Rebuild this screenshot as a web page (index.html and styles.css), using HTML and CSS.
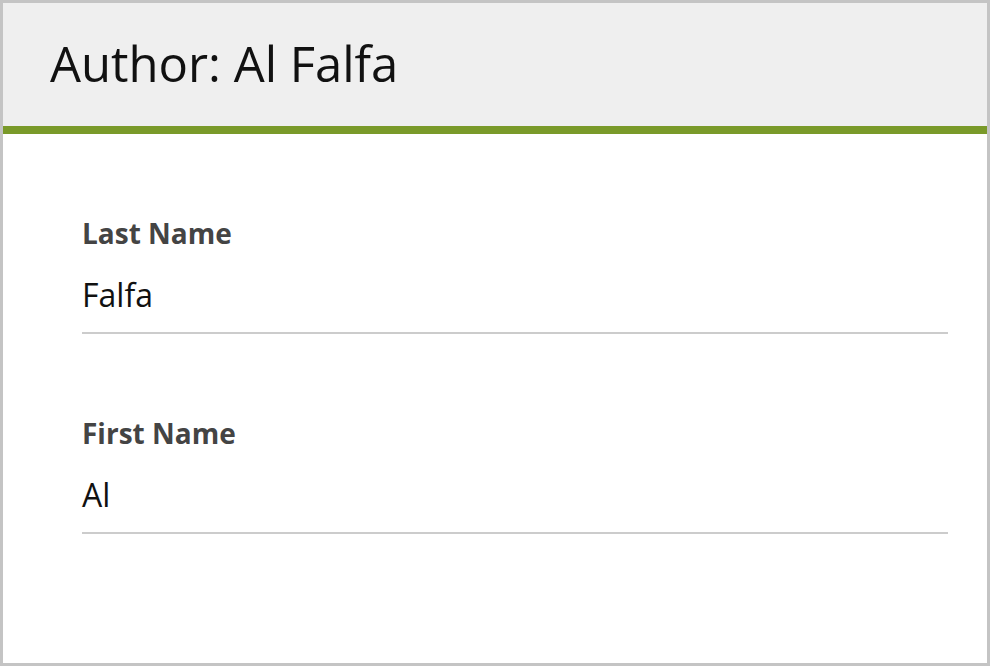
FILE: index.html
```html
<!DOCTYPE html>
<html lang="en">
<head>
    <meta charset="UTF-8">
    <title>Author: Al Falfa</title>
    <link rel="stylesheet" href="styles.css">
</head>
<body>
    <div class="panel">
        <header class="panel-header">
            <h1>Author: Al Falfa</h1>
        </header>

        <section class="fields">
            <!-- last name -->
            <div class="field">
                <label>Last Name</label>
                <div class="value">Falfa</div>
            </div>
            <!-- first name -->
            <div class="field">
                <label>First Name</label>
                <div class="value">Al</div>
            </div>
        </section>
    </div>
</body>
</html>
```

FILE: styles.css
```css
/* Reset */
body {
    margin: 0;
    padding: 0;
    font-family: 'Open Sans', 'Noto Sans', sans-serif;
    background-color: #fff;
}

/* Outer box */
.panel {
    box-sizing: border-box;
    width: 990px;
    height: 666px;
    border: 3px solid #c4c4c4;
    background-color: #fff;
}

/* Title bar */
.panel-header {
    box-sizing: border-box;
    height: 131px;
    background-color: #efefef;
    border-bottom: 8px solid #7a9a2a;
    padding: 0 47px;
    display: flex;
    align-items: center;
}

.panel-header h1 {
    margin: 0;
    font-size: 49px;
    font-weight: 400;
    color: #111;
    line-height: 1;
    padding-bottom: 2px;
}

/* Form fields */
.fields {
    padding: 80px 39px 0 79px;
}

.field {
    border-bottom: 2px solid #cccccc;
    padding-bottom: 15px;
    margin-bottom: 80px;
}

.field label {
    display: block;
    font-size: 28px;
    font-weight: 700;
    color: #444;
    line-height: 38px;
}

.field .value {
    margin-top: 21px;
    font-size: 32px;
    color: #111;
    line-height: 44px;
}
```
